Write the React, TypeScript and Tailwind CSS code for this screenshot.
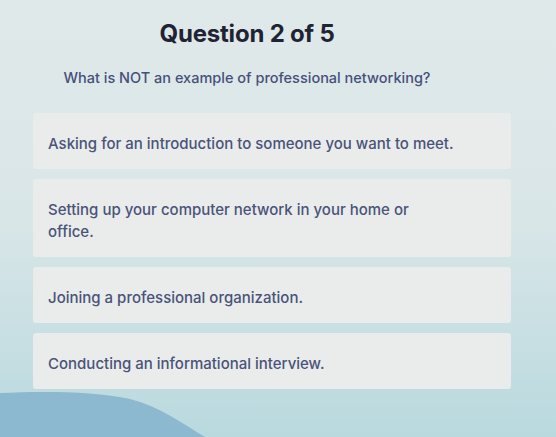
import React from 'react';

const options = [
  'Asking for an introduction to someone you want to meet.',
  'Setting up your computer network in your home or office.',
  'Joining a professional organization.',
  'Conducting an informational interview.',
];

const App: React.FC = () => {
  return (
    <div
      className="relative h-[437px] w-[556px] overflow-hidden bg-gradient-to-b from-[#e0e9ea] via-[#d9e6e8] to-[#b9d9de]"
      style={{ fontFamily: 'Inter, "Liberation Sans", sans-serif' }}
    >
      {/* Decorative wave in the bottom-left corner */}
      <svg
        className="absolute bottom-0 left-0"
        width="260"
        height="46"
        viewBox="0 0 260 46"
        fill="none"
      >
        <path d="M0 2 C40 0 95 0 130 8 C160 16 182 32 205 46 L0 46 Z" fill="#8db9d0" />
      </svg>

      <div className="relative flex flex-col pl-[33px] pr-[45px] pt-[19px]">
        <div className="flex flex-col items-center pr-[50px]">
          <h1 className="text-[24px] font-bold leading-[30px] tracking-[-0.2px] text-[#1f2333]">
            Question 2 of 5
          </h1>
          <p className="mt-[19px] text-[14.5px] font-medium leading-[20px] text-[#45507a]">
            What is NOT an example of professional networking?
          </p>
        </div>

        <div className="mt-[25px] flex flex-col gap-[10px]">
          {options.map((text) => (
            <div
              key={text}
              className="rounded-[3px] bg-[#e9eceb] px-[15px] pb-[14px] pt-[20px] text-[15px] font-medium leading-[22px] text-[#4a5379]"
            >
              <span className="block max-w-[407px]">{text}</span>
            </div>
          ))}
        </div>
      </div>
    </div>
  );
};

export default App;
